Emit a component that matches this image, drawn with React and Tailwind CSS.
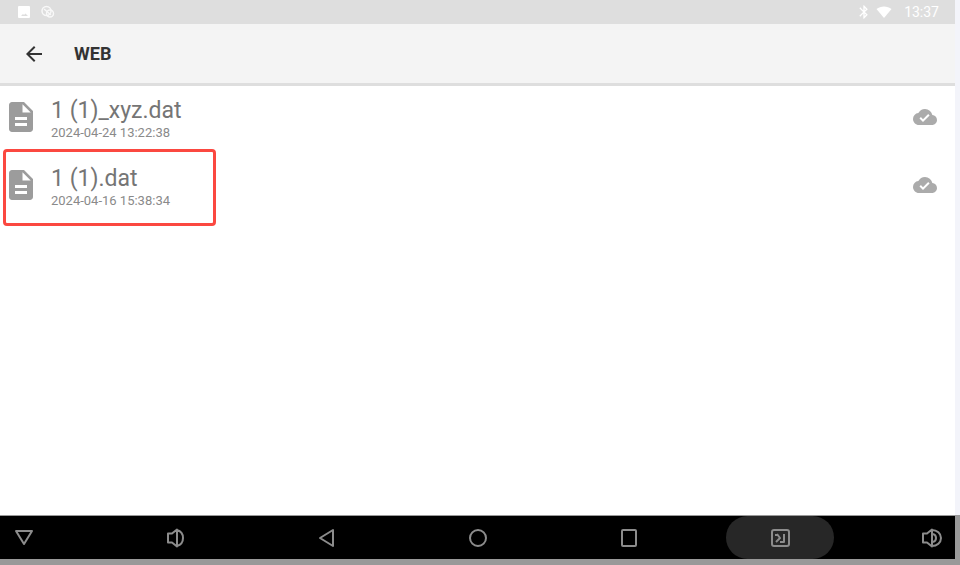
import { MdArrowBack, MdBluetooth, MdCloudDone, MdDescription } from 'react-icons/md';

const files = [
  { id: 1, name: '1 (1)_xyz.dat', date: '2024-04-24 13:22:38', marked: false },
  { id: 2, name: '1 (1).dat', date: '2024-04-16 15:38:34', marked: true },
];

const navItems = [
  { label: 'Hide', shape: <path d="M4 5h16L12 18z" /> },
  {
    label: 'Volume down',
    shape: <path d="M5 7.500h4l5-4v17l-5-4H5zM14 4c3.500 1 6 4 6 8s-2.500 7-6 8" />,
  },
  { label: 'Back', shape: <path d="M19 4v16L6 12z" /> },
  { label: 'Home', shape: <circle cx="13" cy="12" r="8" /> },
  { label: 'Recent apps', shape: <rect x="5" y="4" width="14" height="16" rx="1" /> },
  {
    label: 'Screenshot',
    active: true,
    shape: (
      <>
        <rect x="4" y="4" width="17" height="16" rx="2" />
        <path d="M8 16l4-4-3-4M8 8v2M16 8v8h-4" />
      </>
    ),
  },
  {
    label: 'Volume up',
    shape: <path d="M4 7.500h4l5-4v17l-5-4H4zM13 4c5 0 9 3.500 9 8s-4 8-9 8M14 8c4 1 4 7 0 8" />,
  },
];

const StatusBar = () => (
  <div className="flex h-6 items-center justify-between bg-[#dedede] px-4 text-white">
    <div className="flex items-center gap-2">
      <svg viewBox="0 0 16 16" className="h-4 w-4" fill="currentColor">
        <path fillRule="evenodd" d="M3 2h10a1 1 0 0 1 1 1v10a1 1 0 0 1-1 1H3a1 1 0 0 1-1-1V3a1 1 0 0 1 1-1zm2 10h7L9.500 9.500 8 11 7 10z" />
      </svg>
      <svg viewBox="0 0 16 16" className="h-4 w-4 opacity-80" fill="none" stroke="currentColor" strokeWidth="1.500">
        <circle cx="6.500" cy="7" r="4.500" />
        <circle cx="10" cy="9.500" r="3.500" />
        <path d="M4 5l7 6" />
      </svg>
    </div>
    <div className="flex items-center">
      <MdBluetooth className="mr-1 h-4 w-4" />
      <svg viewBox="0 0 16 12" className="mr-3 h-3 w-4" fill="currentColor">
        <path d="M8 12L.5 3C4.500-.5 11.500-.5 15.500 3z" />
      </svg>
      <span className="text-sm leading-6">13:37</span>
    </div>
  </div>
);

const FileRow = ({ file }) => (
  <li className="relative flex h-[68px] items-center justify-between pb-1.5 pl-[3px] pr-[18px]">
    <div className="flex items-center gap-3">
      <MdDescription className="h-9 w-9 text-[#9c9c9c]" />
      <div className="pt-1">
        <p className="text-[23px] leading-7 text-[#757575]">{file.name}</p>
        <p className="text-[13px] leading-4 text-[#8a8a8a]">{file.date}</p>
      </div>
    </div>
    <MdCloudDone className="h-6 w-6 text-[#ababab]" />
    {file.marked && (
      <div className="pointer-events-none absolute -top-[5px] left-[3px] h-[77px] w-[213px] rounded-sm border-3 border-[#fb4840]" />
    )}
  </li>
);

const NavBar = () => (
  <nav className="-mr-[5px] flex h-[50px] items-center justify-between border-b-6 border-r-5 border-t border-[#999999] bg-black px-3">
    {navItems.map((item) => (
      <button key={item.label} type="button" aria-label={item.label} className="relative h-full w-6 text-[#8c8c8c]">
        {item.active && <span className="absolute inset-y-0 -left-[42px] -right-[42px] rounded-full bg-[#272727]" />}
        <svg viewBox="0 0 24 24" className="relative h-6 w-6" fill="none" stroke="currentColor" strokeWidth="2" strokeLinejoin="round">
          {item.shape}
        </svg>
      </button>
    ))}
  </nav>
);

const App = () => {
  return (
    <div className="min-h-screen bg-[#f3f4fa] pr-[5px] font-['Roboto',sans-serif]">
      <div className="flex min-h-screen flex-col bg-white">
        <StatusBar />
        <header className="flex h-[62px] items-center gap-7 border-b-3 border-[#dedede] bg-[#f4f4f4] pl-[22px]">
          <button type="button" aria-label="Go back" className="text-[#333333]">
            <MdArrowBack className="h-6 w-6" />
          </button>
          <h1 className="text-lg font-bold text-[#333333]">WEB</h1>
        </header>
        <main className="flex-1">
          <ul>
            {files.map((file) => (
              <FileRow key={file.id} file={file} />
            ))}
          </ul>
        </main>
        <NavBar />
      </div>
    </div>
  );
};

export default App;
